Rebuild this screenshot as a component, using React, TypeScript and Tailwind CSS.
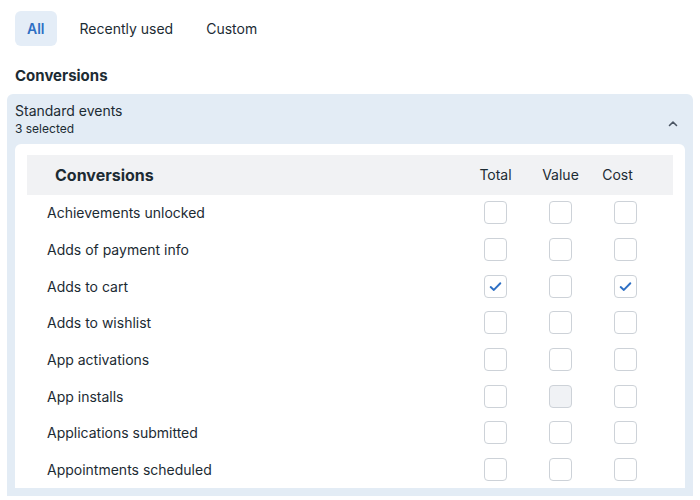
import React from 'react';

const rows: { label: string; checks: (boolean | 'disabled')[] }[] = [
  { label: 'Achievements unlocked', checks: [false, false, false] },
  { label: 'Adds of payment info', checks: [false, false, false] },
  { label: 'Adds to cart', checks: [true, false, true] },
  { label: 'Adds to wishlist', checks: [false, false, false] },
  { label: 'App activations', checks: [false, false, false] },
  { label: 'App installs', checks: [false, 'disabled', false] },
  { label: 'Applications submitted', checks: [false, false, false] },
  { label: 'Appointments scheduled', checks: [false, false, false] },
];

const Box = ({ state }: { state: boolean | 'disabled' }) => (
  <div
    className={
      'w-[23px] h-[23px] rounded-[4px] border border-[#cdd2d8] flex items-center justify-center ' +
      (state === 'disabled' ? 'bg-[#f0f2f5]' : 'bg-white')
    }
  >
    {state === true && (
      <svg width="15" height="15" viewBox="0 0 14 14" fill="none">
        <path d="M2.5 7.5 L5.5 10.2 L11.5 4" stroke="#2d6fc4" strokeWidth="1.8" strokeLinecap="round" strokeLinejoin="round" />
      </svg>
    )}
  </div>
);

export default function App() {
  return (
    <div className="w-[700px] h-[500px] overflow-hidden bg-white text-[#1c2b33]" style={{ fontFamily: 'Inter, "Liberation Sans", sans-serif' }}>
      <div className="flex items-center pt-[11px] pl-[15px]">
        <div className="h-[35px] px-3 rounded-md bg-[#e4edf7] text-[#2d6fc4] font-semibold text-[14px] flex items-center">All</div>
        <div className="h-[35px] px-[23px] text-[14px] flex items-center">Recently used</div>
        <div className="h-[35px] px-[10px] text-[14px] flex items-center">Custom</div>
      </div>
      <div className="pl-[15px] mt-[19px] text-[15px] font-bold">Conversions</div>
      <div className="mx-[7px] mt-[6px] bg-[#e3ecf5] rounded-t-md px-2 pb-2">
        <div className="flex items-center justify-between pt-[8px] pb-[6px] pr-[6px]">
          <div>
            <div className="text-[14px] leading-[18px]">Standard events</div>
            <div className="text-[12px] leading-[18px]">3 selected</div>
          </div>
          <svg width="12" height="12" viewBox="0 0 12 12" fill="none" className="mt-[8px]">
            <path d="M2.5 7.5 L6 4 L9.5 7.5" stroke="#4b5563" strokeWidth="1.6" strokeLinecap="round" strokeLinejoin="round" />
          </svg>
        </div>
        <div className="bg-white rounded-t-md px-3 pt-[11px]">
          <div className="flex items-center h-[40px] bg-[#f1f2f4] text-[14px]">
            <div className="flex-1 pl-7 text-[16px] font-bold">Conversions</div>
            <div className="w-[65px] text-center">Total</div>
            <div className="w-[65px] text-center">Value</div>
            <div className="w-[65px] text-center pr-4">Cost</div>
            <div className="w-[15px]" />
          </div>
          {rows.map((r) => (
            <div key={r.label} className="flex items-center h-[36.7px] text-[14px]">
              <div className="flex-1 pl-5">{r.label}</div>
              {r.checks.map((c, i) => (
                <div key={i} className="w-[65px] flex justify-center">
                  <Box state={c} />
                </div>
              ))}
              <div className="w-[15px]" />
            </div>
          ))}
        </div>
      </div>
    </div>
  );
}
